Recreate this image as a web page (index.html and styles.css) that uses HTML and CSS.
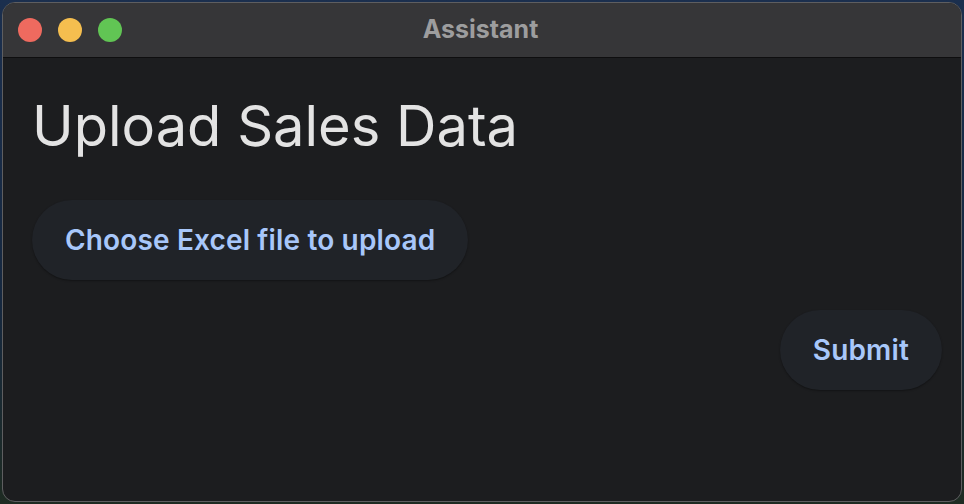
FILE: index.html
```html
<!DOCTYPE html>
<html lang="en">
<head>
<meta charset="utf-8">
<title>Assistant</title>
<link rel="stylesheet" href="styles.css">
</head>
<body>
<div class="window">
  <header class="titlebar">
    <div class="lights">
      <span class="light red"></span>
      <span class="light yellow"></span>
      <span class="light green"></span>
    </div>
    <div class="title">Assistant</div>
    <div></div>
  </header>
  <main class="content">
    <h1 class="heading">Upload Sales Data</h1>
    <div class="row">
      <button class="pill">Choose Excel file to upload</button>
    </div>
    <div class="row end">
      <button class="pill submit">Submit</button>
    </div>
  </main>
</div>
</body>
</html>
```

FILE: styles.css
```css
* { box-sizing: border-box; }
html, body { margin: 0; height: 100%; }
body {
  background: linear-gradient(180deg, #1b2f4e 0%, #16283f 60%, #1e2b22 100%);
  font-family: Inter, "Noto Sans", sans-serif;
  padding: 2px;
}
.window {
  width: 960px;
  height: 500px;
  border: 1px solid #5e5e60;
  border-radius: 13px;
  overflow: hidden;
  background: #1c1d1f;
  display: flex;
  flex-direction: column;
}
.titlebar {
  height: 55px;
  flex: none;
  background: #363638;
  border-bottom: 1px solid #0e0e0f;
  display: grid;
  grid-template-columns: 1fr auto 1fr;
  align-items: center;
  padding: 0 15px;
}
.lights { display: flex; gap: 16px; }
.light { width: 24px; height: 24px; border-radius: 50%; display: block; }
.red { background: #ee6a5f; }
.yellow { background: #f5be4f; }
.green { background: #61c554; }
.title {
  color: #9d9d9e;
  font-weight: 700;
  font-size: 25px;
  line-height: 30px;
  padding-bottom: 2px;
  padding-right: 3px;
}
.content {
  flex: 1;
  padding: 33px 19px 0 29px;
  display: flex;
  flex-direction: column;
}
.heading {
  margin: 0 0 39px 0;
  font-weight: 400;
  font-size: 56px;
  line-height: 70px;
  color: #e3e3e3;
}
.row { display: flex; }
.row.end { justify-content: flex-end; margin-top: 30px; }
.pill {
  height: 80px;
  border: none;
  border-radius: 40px;
  background: #202328;
  box-shadow: 0 1px 2px rgba(0,0,0,0.35);
  color: #a8c7fa;
  font-family: Inter, "Noto Sans", sans-serif;
  font-weight: 600;
  font-size: 28px;
  letter-spacing: 0.15px;
  padding: 0 33px;
}
```
